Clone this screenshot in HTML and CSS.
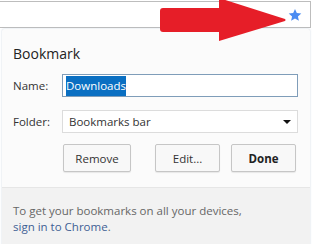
FILE: index.html
```html
<!DOCTYPE html>
<html lang="en">
<head>
  <meta charset="UTF-8" />
  <title>Bookmark</title>
  <link rel="stylesheet" href="styles.css">
</head>
<body>

  <div class="omnibox">
    <svg class="star" width="14" height="14" viewBox="0 0 24 24">
      <path d="M12 1.5l3.1 7.1 7.7.7-5.8 5.1 1.7 7.6L12 18l-6.7 4 1.7-7.6-5.8-5.1 7.7-.7z" fill="#4b8cf2"/>
    </svg>
  </div>

  <svg class="arrow" width="130" height="44" viewBox="0 0 130 44">
    <rect x="0" y="10" width="64" height="24" rx="3" fill="#e61e28"/>
    <path d="M59 0 L125 21 Q126 22 125 23 L59 43 Z" fill="#e61e28"/>
  </svg>

  <div class="bubble">
    <h2>Bookmark</h2>

    <div class="row">
      <label>Name:</label>
      <div class="field name-field"><span class="selected">Downloads</span></div>
    </div>

    <div class="row">
      <label>Folder:</label>
      <div class="field folder-field">
        Bookmarks bar
        <span class="caret"></span>
      </div>
    </div>

    <div class="buttons">
      <button class="btn remove">Remove</button>
      <button class="btn edit">Edit...</button>
      <button class="btn done">Done</button>
    </div>

    <div class="footer">
      To get your bookmarks on all your devices,<br>
      <a href="#">sign in to Chrome</a>.
    </div>
  </div>

</body>
</html>
```

FILE: styles.css
```css
body {
  margin: 0;
  background: #fff;
  font-family: 'Open Sans', 'Noto Sans', sans-serif;
  color: #333;
  overflow: hidden;
}
.omnibox {
  margin: 1px 1px 0 0;
  height: 25px;
  border: 1px solid #bdbdbd;
  border-left: none;
  background: #fff;
  display: flex;
  justify-content: flex-end;
  align-items: center;
  padding-right: 8px;
}
.star {
  display: block;
}
.arrow {
  position: absolute;
  left: 160px;
  top: -2px;
}
.bubble {
  margin: 1px 2px 0 2px;
  background: #fbfbfb;
  border-radius: 2px;
  box-shadow: 0 0 2px rgba(90, 120, 160, 0.35);
}
h2 {
  margin: 0;
  padding: 15px 11px 11px;
  font-size: 14px;
  font-weight: 400;
  line-height: 19px;
  color: #222;
}
.row {
  display: flex;
  align-items: center;
  padding: 0 12px 0 11px;
  margin-bottom: 13px;
}
.row label {
  width: 49px;
  font-size: 11.5px;
  color: #333;
}
.field {
  flex: 1;
  height: 21px;
  border: 1px solid #d8d8d8;
  background: #fff;
  font-size: 11.5px;
  line-height: 21px;
  padding-left: 3px;
  position: relative;
}
.name-field {
  border-color: #7f9db9;
}
.selected {
  background: #0a6fc2;
  color: #fff;
  padding: 2px 0 3px;
}
.folder-field {
  padding-left: 6px;
  border-color: #dcdcdc;
}
.caret {
  position: absolute;
  right: 6px;
  top: 9px;
  border-left: 4px solid transparent;
  border-right: 4px solid transparent;
  border-top: 4px solid #111;
}
.buttons {
  display: flex;
  justify-content: flex-end;
  padding: 0 14px 15px 0;
  margin-top: -2px;
}
.btn {
  height: 28px;
  border: 1px solid #c6c6c6;
  border-radius: 2px;
  background: #f8f8f8;
  box-shadow: 0 1px 1px rgba(0, 0, 0, 0.08);
  font-family: inherit;
  font-size: 11.5px;
  color: #333;
  padding: 0;
}
.remove {
  width: 68px;
}
.edit {
  width: 65px;
  margin-left: 24px;
}
.done {
  width: 65px;
  margin-left: 11px;
  font-weight: 700;
  color: #222;
}
.footer {
  background: #f2f2f2;
  border-top: 1px solid #e6e6e6;
  padding: 15px 11px 20px;
  font-size: 11.5px;
  line-height: 16px;
  color: #666;
}
.footer a {
  color: #3f5f94;
  text-decoration: none;
}
```
